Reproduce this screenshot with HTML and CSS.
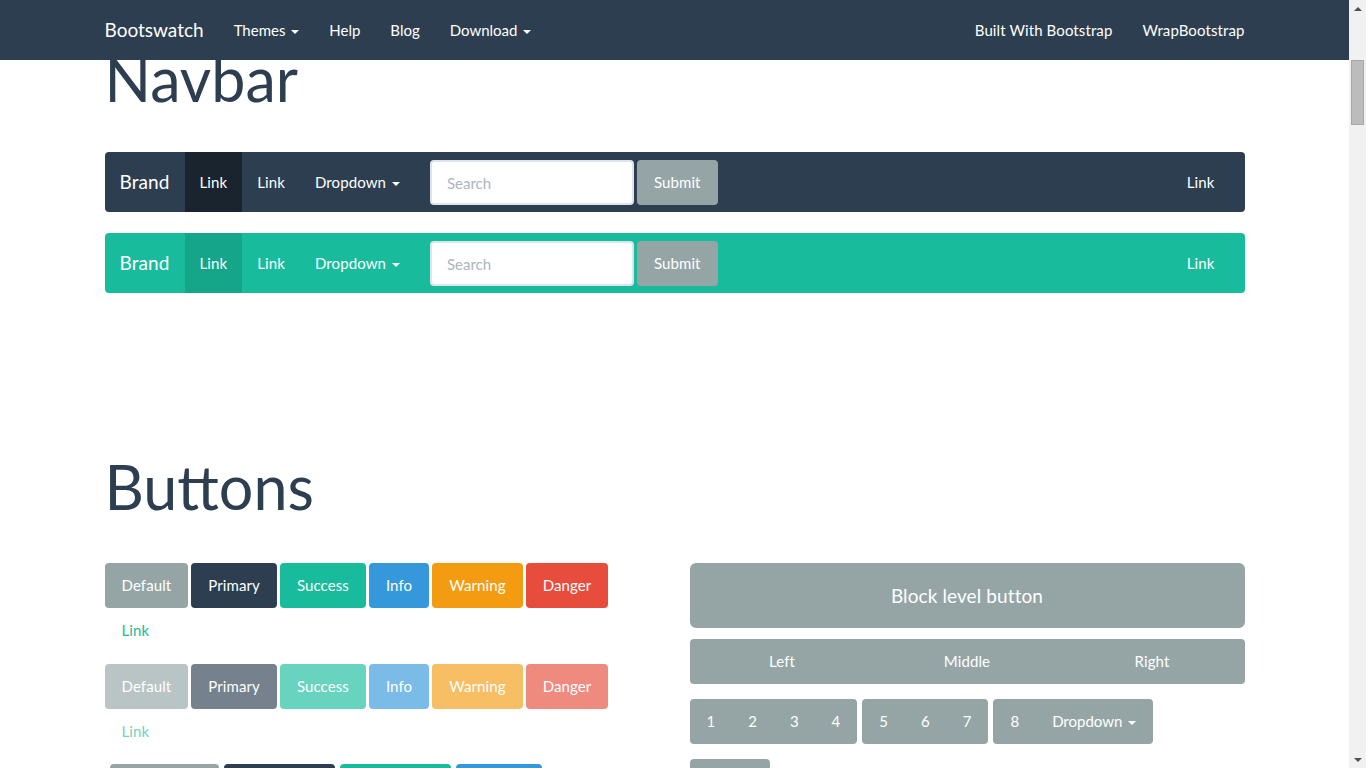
FILE: index.html
```html
<!DOCTYPE html>
<html lang="en">
<head>
<meta charset="utf-8">
<title>Bootswatch: Flatly</title>
<link rel="stylesheet" href="styles.css">
</head>
<body>
<div class="window">
  <div class="viewport">
    <header class="topbar">
      <div class="container topbar-inner">
        <a class="topbar-brand">Bootswatch</a>
        <ul class="topbar-nav">
          <li><a>Themes <span class="caret"></span></a></li>
          <li><a>Help</a></li>
          <li><a>Blog</a></li>
          <li><a>Download <span class="caret"></span></a></li>
        </ul>
        <ul class="topbar-nav topbar-right">
          <li><a>Built With Bootstrap</a></li>
          <li><a>WrapBootstrap</a></li>
        </ul>
      </div>
    </header>

    <main class="container content">
      <h1 class="section-title">Navbar</h1>

      <nav class="demo-nav demo-dark">
        <span class="demo-brand">Brand</span>
        <ul class="demo-links">
          <li class="active"><a>Link</a></li>
          <li><a>Link</a></li>
          <li><a>Dropdown <span class="caret"></span></a></li>
        </ul>
        <form class="demo-form">
          <input class="form-control" type="text" placeholder="Search">
          <button type="button" class="btn btn-default">Submit</button>
        </form>
        <ul class="demo-links demo-right">
          <li><a>Link</a></li>
        </ul>
      </nav>

      <nav class="demo-nav demo-green">
        <span class="demo-brand">Brand</span>
        <ul class="demo-links">
          <li class="active"><a>Link</a></li>
          <li><a>Link</a></li>
          <li><a>Dropdown <span class="caret"></span></a></li>
        </ul>
        <form class="demo-form">
          <input class="form-control" type="text" placeholder="Search">
          <button type="button" class="btn btn-default">Submit</button>
        </form>
        <ul class="demo-links demo-right">
          <li><a>Link</a></li>
        </ul>
      </nav>

      <h1 class="section-title title-buttons">Buttons</h1>

      <div class="row">
        <div class="col">
          <div class="btn-row">
            <button type="button" class="btn btn-default">Default</button>
            <button type="button" class="btn btn-primary">Primary</button>
            <button type="button" class="btn btn-success">Success</button>
            <button type="button" class="btn btn-info">Info</button>
            <button type="button" class="btn btn-warning">Warning</button>
            <button type="button" class="btn btn-danger">Danger</button>
            <button type="button" class="btn btn-link">Link</button>
          </div>
          <div class="btn-row is-disabled">
            <button type="button" class="btn btn-default">Default</button>
            <button type="button" class="btn btn-primary">Primary</button>
            <button type="button" class="btn btn-success">Success</button>
            <button type="button" class="btn btn-info">Info</button>
            <button type="button" class="btn btn-warning">Warning</button>
            <button type="button" class="btn btn-danger">Danger</button>
            <button type="button" class="btn btn-link">Link</button>
          </div>
          <div class="btn-toolbar split-row">
            <div class="btn-group">
              <button type="button" class="btn btn-default">Default</button>
              <button type="button" class="btn btn-default btn-split"><span class="caret"></span></button>
            </div>
            <div class="btn-group">
              <button type="button" class="btn btn-primary">Primary</button>
              <button type="button" class="btn btn-primary btn-split"><span class="caret"></span></button>
            </div>
            <div class="btn-group">
              <button type="button" class="btn btn-success">Success</button>
              <button type="button" class="btn btn-success btn-split"><span class="caret"></span></button>
            </div>
            <div class="btn-group">
              <button type="button" class="btn btn-info">Info</button>
              <button type="button" class="btn btn-info btn-split"><span class="caret"></span></button>
            </div>
          </div>
        </div>

        <div class="col">
          <button type="button" class="btn btn-default btn-lg btn-block">Block level button</button>
          <div class="btn-group btn-justified">
            <button type="button" class="btn btn-default">Left</button>
            <button type="button" class="btn btn-default">Middle</button>
            <button type="button" class="btn btn-default">Right</button>
          </div>
          <div class="btn-toolbar">
            <div class="btn-group">
              <button type="button" class="btn btn-default">1</button>
              <button type="button" class="btn btn-default">2</button>
              <button type="button" class="btn btn-default">3</button>
              <button type="button" class="btn btn-default">4</button>
            </div>
            <div class="btn-group">
              <button type="button" class="btn btn-default">5</button>
              <button type="button" class="btn btn-default">6</button>
              <button type="button" class="btn btn-default">7</button>
            </div>
            <div class="btn-group">
              <button type="button" class="btn btn-default">8</button>
              <button type="button" class="btn btn-default">Dropdown <span class="caret"></span></button>
            </div>
          </div>
          <div class="btn-group-vertical">
            <button type="button" class="btn btn-default">Button</button>
            <button type="button" class="btn btn-default">Button</button>
          </div>
        </div>
      </div>
    </main>
  </div>

  <div class="scrollbar" aria-hidden="true">
    <div class="sb-btn"><span class="sb-arrow-up"></span></div>
    <div class="sb-track"><div class="sb-thumb"></div></div>
    <div class="sb-btn"><span class="sb-arrow-down"></span></div>
  </div>
</div>
</body>
</html>
```

FILE: styles.css
```css
* {
  box-sizing: border-box;
}

html,
body {
  margin: 0;
  padding: 0;
  height: 100%;
  overflow: hidden;
}

body {
  font-family: Lato, "Open Sans", "Liberation Sans", sans-serif;
  font-size: 15px;
  line-height: 1.42857143;
  letter-spacing: 0.1px;
  color: #2c3e50;
  background: #ffffff;
}

a {
  text-decoration: none;
  cursor: pointer;
}

ul {
  list-style: none;
  margin: 0;
  padding: 0;
}

.window {
  display: flex;
  width: 1366px;
  height: 768px;
}

.viewport {
  flex: 1;
  height: 768px;
  overflow: hidden;
}

.container {
  width: 1170px;
  margin: 0 auto;
  padding: 0 15px;
}

/* ---------- fixed top navbar ---------- */
.topbar {
  position: fixed;
  top: 0;
  left: 0;
  right: 17px;
  height: 60px;
  background: #2c3e50;
  z-index: 10;
}

.topbar-inner {
  display: flex;
  align-items: center;
  height: 60px;
}

.topbar-brand {
  margin-left: -15px;
  padding: 0 15px;
  font-size: 19px;
  line-height: 60px;
  letter-spacing: 0;
  color: #ffffff;
}

.topbar-nav {
  display: flex;
}

.topbar-nav a {
  display: block;
  padding: 0 15px;
  line-height: 60px;
  color: #ffffff;
}

.topbar-nav:not(.topbar-right) a {
  letter-spacing: 0;
}

.topbar-right {
  margin-left: auto;
  margin-right: -15px;
}

.caret {
  display: inline-block;
  width: 0;
  height: 0;
  margin-left: 2px;
  vertical-align: middle;
  border-top: 4px solid;
  border-right: 4px solid transparent;
  border-left: 4px solid transparent;
}

/* ---------- content ---------- */
.content {
  padding-top: 46px;
}

.section-title {
  margin: 0;
  font-size: 61px;
  font-weight: 400;
  line-height: 66px;
  letter-spacing: 0;
  color: #2c3e50;
}

.title-buttons {
  margin-top: 161px;
}

/* ---------- demo navbars ---------- */
.demo-nav {
  display: flex;
  height: 60px;
  padding: 0 15px;
  border-radius: 4px;
}

.demo-dark {
  background: #2c3e50;
  margin-top: 40px;
  margin-bottom: 21px;
}

.demo-green {
  background: #18bc9c;
}

.demo-brand {
  margin-left: -15px;
  padding: 0 15px;
  font-size: 19px;
  line-height: 60px;
  color: #ffffff;
}

.demo-links {
  display: flex;
}

.demo-links a {
  display: block;
  padding: 0 15px;
  line-height: 60px;
  color: #ffffff;
}

.demo-dark .active a {
  background: #1a242f;
}

.demo-green .active a {
  background: #15a589;
}

.demo-form {
  display: flex;
  align-items: center;
  gap: 3px;
  padding: 0 15px;
}

.demo-form .btn {
  height: 45px;
  margin-top: 1px;
}

.demo-form .form-control {
  margin-top: 1px;
}

.demo-right {
  margin-left: auto;
}

.form-control {
  width: 204px;
  height: 45px;
  padding: 10px 15px;
  font-family: inherit;
  font-size: 15px;
  color: #2c3e50;
  background: #ffffff;
  border: 2px solid #dce4ec;
  border-radius: 4px;
  outline: none;
}

.form-control::placeholder {
  color: #acb6c0;
}

/* ---------- buttons ---------- */
.row {
  display: grid;
  grid-template-columns: 1fr 1fr;
  column-gap: 30px;
  margin-top: 43px;
}

.btn {
  display: inline-block;
  margin: 0;
  padding: 10px 15px;
  font-family: inherit;
  font-size: 15px;
  font-weight: 400;
  line-height: 21px;
  letter-spacing: inherit;
  color: #ffffff;
  text-align: center;
  white-space: nowrap;
  border: 2px solid transparent;
  border-radius: 4px;
  cursor: pointer;
}

.btn-default { background: #95a5a6; border-color: #95a5a6; }
.btn-primary { background: #2c3e50; border-color: #2c3e50; }
.btn-success { background: #18bc9c; border-color: #18bc9c; }
.btn-info { background: #3498db; border-color: #3498db; }
.btn-warning { background: #f39c12; border-color: #f39c12; }
.btn-danger { background: #e74c3c; border-color: #e74c3c; }

.btn-link {
  background: transparent;
  border-color: transparent;
  color: #18bc9c;
}

.btn-row {
  display: flex;
  flex-wrap: wrap;
  column-gap: 3px;
  margin-bottom: 10.5px;
}

.is-disabled .btn {
  opacity: 0.65;
}

.btn-lg {
  padding: 18px 27px;
  font-size: 19px;
  line-height: 25.33px;
  border-radius: 6px;
}

.btn-block {
  display: block;
  width: 100%;
  margin-bottom: 10.5px;
}

.btn-group {
  display: inline-flex;
}

.btn-group .btn + .btn {
  margin-left: -1px;
}

.btn-group .btn:not(:last-child) {
  border-top-right-radius: 0;
  border-bottom-right-radius: 0;
}

.btn-group .btn:not(:first-child) {
  border-top-left-radius: 0;
  border-bottom-left-radius: 0;
}

.btn-justified {
  display: flex;
  width: 100%;
  margin-bottom: 15px;
}

.btn-justified .btn {
  flex: 1 1 0;
}

.btn-justified .btn + .btn {
  margin-left: 0;
}

.btn-toolbar {
  display: flex;
  gap: 5px;
  margin-bottom: 15px;
}

.btn-toolbar .btn {
  letter-spacing: 0;
}

.split-row {
  margin-left: 5px;
}

.btn-split {
  padding-left: 7.5px;
  padding-right: 7.5px;
}

.btn-split .caret {
  margin-left: 0;
}

.btn-group-vertical {
  display: inline-flex;
  flex-direction: column;
}

.btn-group-vertical .btn:first-child {
  border-bottom-left-radius: 0;
  border-bottom-right-radius: 0;
}

.btn-group-vertical .btn + .btn {
  margin-top: -1px;
  border-top-left-radius: 0;
  border-top-right-radius: 0;
}

/* ---------- window scrollbar ---------- */
.scrollbar {
  display: flex;
  flex-direction: column;
  width: 17px;
  height: 768px;
  background: #f1f1f1;
}

.sb-btn {
  display: flex;
  align-items: center;
  justify-content: center;
  height: 17px;
  flex: none;
}

.sb-arrow-up,
.sb-arrow-down {
  width: 0;
  height: 0;
  border-left: 4px solid transparent;
  border-right: 4px solid transparent;
}

.sb-arrow-up {
  border-bottom: 4px solid #505050;
}

.sb-arrow-down {
  border-top: 4px solid #505050;
}

.sb-track {
  flex: 1;
  padding: 43px 2px 0;
}

.sb-thumb {
  height: 65px;
  background: #bcbcbc;
  border: 1px solid #a8a8a8;
}
```
